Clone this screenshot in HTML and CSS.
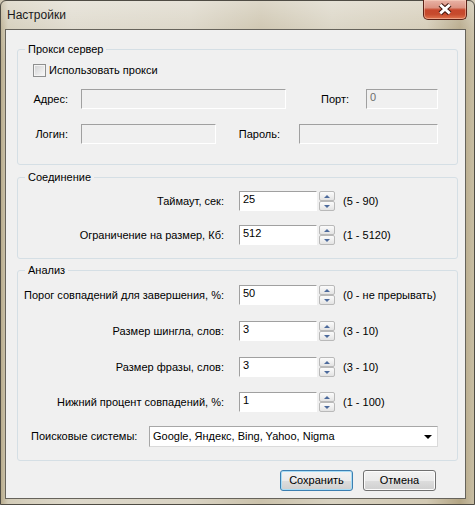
FILE: index.html
```html
<!DOCTYPE html>
<html lang="ru">
<head>
<meta charset="utf-8">
<title>Настройки</title>
<link rel="stylesheet" href="styles.css">
</head>
<body>
<div class="window">
  <div class="titlebar">
    <span class="title">Настройки</span>
    <button class="close" aria-label="Закрыть">
      <svg width="44" height="19" viewBox="0 0 44 19">
        <path d="M17 4.5 L27 13.5 M27 4.5 L17 13.5" stroke="#40160e" stroke-width="5.2" fill="none"/>
        <path d="M17 4.5 L27 13.5 M27 4.5 L17 13.5" stroke="#ffffff" stroke-width="3" fill="none"/>
      </svg>
    </button>
  </div>
  <div class="client">
    <fieldset class="group g-proxy">
      <legend>Прокси сервер</legend>
      <div class="check-row"><span class="checkbox"></span><span>Использовать прокси</span></div>
      <div class="row row-addr">
        <span class="lbl lbl-short">Адрес:</span>
        <span class="input disabled w-addr"></span>
        <span class="lbl lbl-port">Порт:</span>
        <span class="input disabled w-port">0</span>
      </div>
      <div class="row row-login">
        <span class="lbl lbl-short">Логин:</span>
        <span class="input disabled w-login"></span>
        <span class="lbl lbl-pass">Пароль:</span>
        <span class="input disabled w-pass"></span>
      </div>
    </fieldset>

    <fieldset class="group g-conn">
      <legend>Соединение</legend>
      <div class="row r-c1">
        <span class="lbl lbl-wide">Таймаут, сек:</span>
        <span class="input num">25</span>
        <span class="spin"><span class="spin-btn up"></span><span class="spin-btn down"></span></span>
        <span class="hint">(5 - 90)</span>
      </div>
      <div class="row r-c2">
        <span class="lbl lbl-wide">Ограничение на размер, Кб:</span>
        <span class="input num">512</span>
        <span class="spin"><span class="spin-btn up"></span><span class="spin-btn down"></span></span>
        <span class="hint">(1 - 5120)</span>
      </div>
    </fieldset>

    <fieldset class="group g-anal">
      <legend>Анализ</legend>
      <div class="row r-a1">
        <span class="lbl lbl-wide">Порог совпадений для завершения, %:</span>
        <span class="input num">50</span>
        <span class="spin"><span class="spin-btn up"></span><span class="spin-btn down"></span></span>
        <span class="hint">(0 - не прерывать)</span>
      </div>
      <div class="row r-a2">
        <span class="lbl lbl-wide">Размер шингла, слов:</span>
        <span class="input num">3</span>
        <span class="spin"><span class="spin-btn up"></span><span class="spin-btn down"></span></span>
        <span class="hint">(3 - 10)</span>
      </div>
      <div class="row r-a3">
        <span class="lbl lbl-wide">Размер фразы, слов:</span>
        <span class="input num">3</span>
        <span class="spin"><span class="spin-btn up"></span><span class="spin-btn down"></span></span>
        <span class="hint">(3 - 10)</span>
      </div>
      <div class="row r-a4">
        <span class="lbl lbl-wide">Нижний процент совпадений, %:</span>
        <span class="input num">1</span>
        <span class="spin"><span class="spin-btn up"></span><span class="spin-btn down"></span></span>
        <span class="hint">(1 - 100)</span>
      </div>
      <div class="row r-a5">
        <span class="lbl lbl-combo">Поисковые системы:</span>
        <span class="combo"><span>Google, Яндекс, Bing, Yahoo, Nigma</span><span class="combo-arrow"></span></span>
      </div>
    </fieldset>

    <div class="buttons">
      <button class="btn default">Сохранить</button>
      <button class="btn">Отмена</button>
    </div>
  </div>
</div>
</body>
</html>
```

FILE: styles.css
```css
* { box-sizing: border-box; }

html, body {
  margin: 0;
  padding: 0;
}

body {
  width: 475px;
  height: 505px;
  overflow: hidden;
  font-family: "Liberation Sans", Arial, sans-serif;
  font-size: 11px;
  line-height: 13px;
  color: #000;
  background: #cfc7b2;
}

.window {
  width: 475px;
  height: 505px;
  display: flex;
  flex-direction: column;
  border: 1px solid #4f4c44;
  border-radius: 6px 6px 0 0;
  background:
    linear-gradient(180deg, rgba(255,255,255,0.35) 0, rgba(255,255,255,0.1) 28px, rgba(255,255,255,0) 60px),
    linear-gradient(90deg, #b9ad8e 0%, #d3ccb8 1.5%, #ddd8ca 15%, #d9d3c3 40%, #cbc2ab 55%, #d8d2c1 70%, #d2c9b3 90%, #b3a584 97%, #c8bea4 100%);
}

.titlebar {
  height: 28px;
  display: flex;
  align-items: flex-start;
  flex: none;
}

.title {
  font-family: "Liberation Sans", Arial, sans-serif;
  font-size: 12px;
  line-height: 15px;
  color: #1a1a1a;
  margin: 7px 0 0 6px;
}

.close {
  margin: -1px 7px 0 auto;
  width: 44px;
  height: 20px;
  padding: 0;
  border: 1px solid #5b2117;
  border-top: none;
  border-radius: 0 0 5px 5px;
  background: linear-gradient(180deg, #e9b3a6 0%, #dc9382 40%, #c7472c 52%, #c64a2d 75%, #e0754f 100%);
  box-shadow: inset 0 0 0 1px rgba(255,220,200,0.45);
  display: flex;
  align-items: center;
  justify-content: center;
}

.close svg { display: block; }

.client {
  margin-left: 4px;
  width: 461px;
  height: 470px;
  border: 1px solid #66635b;
  background: #f0f0f0;
  display: flex;
  flex-direction: column;
  flex: none;
}

.group {
  margin: 0 7px 0 11px;
  padding: 0;
  min-width: 0;
  border: 1px solid #d5dfe5;
  border-radius: 3px;
}

.group legend {
  margin-left: 7px;
  padding: 0 3px;
  line-height: 13px;
}

.g-proxy { margin-top: 13px; padding-bottom: 20px; }
.g-conn { margin-top: 6px; padding-bottom: 13px; }
.g-anal { margin-top: 5px; padding-bottom: 13px; }

.check-row {
  margin-top: 4px;
  height: 20px;
  padding-left: 15px;
  display: flex;
  align-items: center;
  gap: 3px;
}

.checkbox {
  width: 13px;
  height: 13px;
  border: 1px solid #8e8f8f;
  background: linear-gradient(135deg, #cfd0d2 0%, #eeeeee 70%, #f8f8f8 100%);
  box-shadow: inset 0 0 0 1px #f4f4f4;
}

.row {
  height: 20px;
  display: flex;
  align-items: center;
}

.row-addr { margin-top: 9px; }
.row-login { margin-top: 15px; }
.r-c1 { margin-top: 7px; }
.r-c2 { margin-top: 14px; }
.r-a1 { margin-top: 8px; }
.r-a2 { margin-top: 16px; }
.r-a3 { margin-top: 16px; }
.r-a4 { margin-top: 15px; }
.r-a5 { margin-top: 14px; height: 21px; }

.lbl { white-space: nowrap; flex: none; }
.lbl-short { width: 50px; text-align: right; margin-right: 13px; }
.lbl-port { width: 63px; text-align: right; margin-right: 17px; }
.lbl-pass { width: 64px; text-align: right; margin-right: 19px; }
.lbl-wide { width: 206px; text-align: right; margin-right: 15px; }
.lbl-combo { width: 131px; padding-left: 13px; }

.input {
  height: 20px;
  flex: none;
  border: 1px solid;
  border-color: #a0a0a0 #ffffff #ffffff #a0a0a0;
  background: #fff;
  padding: 1px 3px 0;
  line-height: 13px;
  align-self: flex-start;
}

.input.disabled {
  background: #f0f0f0;
  color: #6d6d6d;
}

.w-addr { width: 205px; }
.w-port { width: 72px; }
.w-login { width: 135px; }
.w-pass { width: 139px; }
.num { width: 78px; }

.spin {
  margin-left: 2px;
  width: 16px;
  height: 20px;
  display: flex;
  flex-direction: column;
  flex: none;
}

.spin-btn {
  height: 10px;
  border: 1px solid #b9b9b9;
  border-radius: 2px;
  background: linear-gradient(180deg, #fbfbfb 0%, #f0f0f0 50%, #e3e3e3 100%);
  display: flex;
  align-items: center;
  justify-content: center;
}

.spin-btn::after {
  content: "";
  width: 0;
  height: 0;
  border-left: 3px solid transparent;
  border-right: 3px solid transparent;
}

.spin-btn.up::after { border-bottom: 3px solid #4c6a9c; }
.spin-btn.down::after { border-top: 3px solid #4c6a9c; }

.hint {
  margin-left: 8px;
  white-space: nowrap;
}

.combo {
  width: 289px;
  height: 21px;
  border: 1px solid;
  border-color: #a7a7a7 #dadada #dadada #a7a7a7;
  background: #fff;
  padding: 0 5px 0 3px;
  display: flex;
  align-items: center;
  justify-content: space-between;
}

.combo-arrow {
  width: 0;
  height: 0;
  border-left: 4px solid transparent;
  border-right: 4px solid transparent;
  border-top: 4px solid #000;
}

.buttons {
  margin-top: 9px;
  padding-right: 29px;
  display: flex;
  justify-content: flex-end;
  gap: 10px;
}

.btn {
  width: 73px;
  height: 21px;
  padding: 0;
  font-family: inherit;
  font-size: 11px;
  line-height: 13px;
  color: #000;
  border: 1px solid #707070;
  border-radius: 3px;
  background: linear-gradient(180deg, #f2f2f2 0%, #ebebeb 50%, #dddddd 51%, #cfcfcf 100%);
  box-shadow: inset 0 0 0 1px #fcfcfc;
}

.btn.default {
  border-color: #3c7fb1;
  box-shadow: inset 0 0 0 1px #a8dcf5;
}
```
